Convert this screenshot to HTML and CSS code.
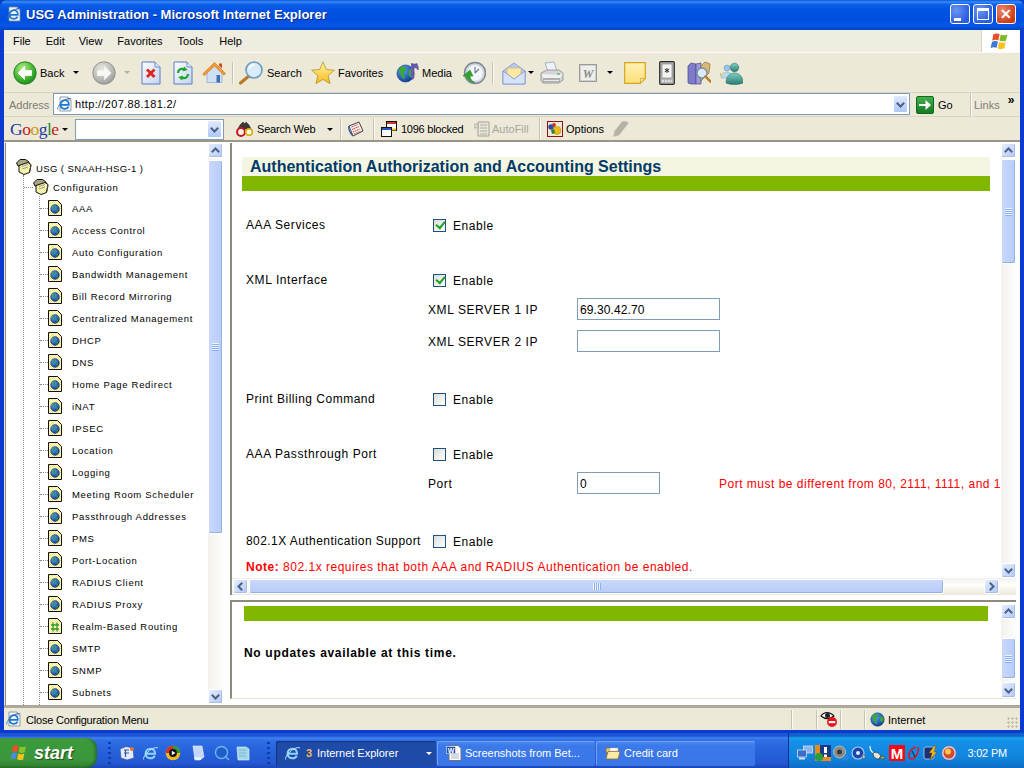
FILE: index.html
```html
<!DOCTYPE html>
<html lang="en">
<head>
<meta charset="utf-8">
<title>USG Administration - Microsoft Internet Explorer</title>
<link rel="stylesheet" href="styles.css">
</head>
<body>
<svg class="defs" width="0" height="0" aria-hidden="true">
  <defs>
    <radialGradient id="gGreen" cx="40%" cy="30%" r="75%"><stop offset="0" stop-color="#b6ee8e"/><stop offset=".55" stop-color="#4cbb38"/><stop offset="1" stop-color="#148a18"/></radialGradient>
    <radialGradient id="gGray" cx="40%" cy="30%" r="75%"><stop offset="0" stop-color="#e6e6e2"/><stop offset=".6" stop-color="#bdbdb8"/><stop offset="1" stop-color="#9a9a96"/></radialGradient>
    <linearGradient id="gPage" x1="0" y1="0" x2="1" y2="1"><stop offset="0" stop-color="#fbfcff"/><stop offset="1" stop-color="#c4d4f2"/></linearGradient>
    <linearGradient id="gStar" x1="0" y1="0" x2="0" y2="1"><stop offset="0" stop-color="#fff6a8"/><stop offset="1" stop-color="#f5b818"/></linearGradient>
    <linearGradient id="gNote" x1="0" y1="0" x2="0" y2="1"><stop offset="0" stop-color="#fff2b2"/><stop offset="1" stop-color="#fddf7c"/></linearGradient>
    <radialGradient id="gGlobe" cx="35%" cy="30%" r="80%"><stop offset="0" stop-color="#5aa8f0"/><stop offset="1" stop-color="#0a2f8e"/></radialGradient>
    <linearGradient id="gFolder" x1="0" y1="0" x2="0" y2="1"><stop offset="0" stop-color="#fff3b8"/><stop offset="1" stop-color="#e2b958"/></linearGradient>
    <linearGradient id="gGo" x1="0" y1="0" x2="0" y2="1"><stop offset="0" stop-color="#48b04c"/><stop offset="1" stop-color="#117a24"/></linearGradient>
    <linearGradient id="gMsg" x1="0" y1="0" x2="0" y2="1"><stop offset="0" stop-color="#7ed0c0"/><stop offset="1" stop-color="#2a7a72"/></linearGradient>
    <pattern id="dither" width="2" height="2" patternUnits="userSpaceOnUse"><rect width="2" height="2" fill="#fff"/><rect width="1" height="1" fill="#f5ea60"/><rect x="1" y="1" width="1" height="1" fill="#f5ea60"/></pattern>

    <symbol id="ie" viewBox="0 0 16 16">
      <path d="M3 1h8l3 3v11H3z" fill="#f4f6fb" stroke="#7d8794" stroke-width=".8"/>
      <path d="M11 1v3h3" fill="#cfd6e4" stroke="#7d8794" stroke-width=".6"/>
      <path d="M3.500 8.800h8.300c.2-2.800-1.500-4.600-3.900-4.600-2.600 0-4.400 1.900-4.400 4.300 0 2.500 1.800 4.300 4.400 4.300 1.800 0 3-.8 3.700-2.200" fill="none" stroke="#1a78d0" stroke-width="1.700"/>
      <path d="M.8 13.500c-.9-2 3-6.800 7-9.300 3-1.800 5.500-2.200 6.500-1.300" fill="none" stroke="#2a6cc4" stroke-width=".9"/>
    </symbol>
    <symbol id="ieBlue" viewBox="0 0 16 16">
      <path d="M2.200 8.800h9.800c.2-3.100-1.700-5.100-4.400-5.100-2.900 0-5 2.100-5 4.800s2.100 4.800 5 4.800c2 0 3.400-.9 4.200-2.500" fill="none" stroke="#8ed1fa" stroke-width="2.100"/>
      <path d="M.7 14.500c-1-2 3-7.300 7.300-10 3.200-2 6-2.400 7-1.400" fill="none" stroke="#c4e6fc" stroke-width="1"/>
    </symbol>
    <symbol id="back" viewBox="0 0 24 24">
      <circle cx="12" cy="12" r="11.200" fill="url(#gGreen)" stroke="#1d7e22" stroke-width=".9"/>
      <path d="M5 12l6.500-6.500v4h7v5h-7v4z" fill="#fff" stroke="#fff" stroke-width=".8" stroke-linejoin="round"/>
    </symbol>
    <symbol id="fwd" viewBox="0 0 24 24">
      <circle cx="12" cy="12" r="11.200" fill="url(#gGray)" stroke="#8e8e8a" stroke-width=".9"/>
      <path d="M19 12l-6.500-6.500v4h-7v5h7v4z" fill="#f7f7f5" stroke="#f7f7f5" stroke-width=".8" stroke-linejoin="round"/>
    </symbol>
    <symbol id="stop" viewBox="0 0 20 24">
      <path d="M1 1h13l5 5v17H1z" fill="url(#gPage)" stroke="#5a7cc0"/>
      <path d="M14 1v5h5" fill="#dfe8fa" stroke="#5a7cc0" stroke-width=".8"/>
      <path d="M6 8.500l7.500 7.500M13.500 8.500L6 16" stroke="#e1231c" stroke-width="2.800"/>
    </symbol>
    <symbol id="refresh" viewBox="0 0 20 24">
      <path d="M1 1h13l5 5v17H1z" fill="url(#gPage)" stroke="#5a7cc0"/>
      <path d="M14 1v5h5" fill="#dfe8fa" stroke="#5a7cc0" stroke-width=".8"/>
      <path d="M5 12c0-3 2.500-4.500 5-4l2 1" fill="none" stroke="#1ea52a" stroke-width="2.300"/>
      <path d="M11 5.500l3.800 3.500-5 1.200z" fill="#1ea52a"/>
      <path d="M15 13c0 3-2.500 4.500-5 4l-2-1" fill="none" stroke="#1ea52a" stroke-width="2.300"/>
      <path d="M9 19.500L5.200 16l5-1.200z" fill="#1ea52a"/>
    </symbol>
    <symbol id="home" viewBox="0 0 24 24">
      <path d="M5 11v10.500h15V11l-7-7z" fill="#cfe0f5" stroke="#8aa6cc" stroke-width=".7"/>
      <path d="M14.500 14h3.500v7.500h-3.500z" fill="#3f6fb5"/>
      <path d="M.7 13L12.500 1.500 23.500 12.500l-1.500 1.700L12.500 5 2.500 14.500z" fill="#f49a30" stroke="#c96c12" stroke-width=".6"/>
      <path d="M17 2.500h3v5l-3-2.800z" fill="#d84a22"/>
    </symbol>
    <symbol id="search" viewBox="0 0 26 24">
      <path d="M11.500 14.500l-9 7.500" stroke="#b97a2a" stroke-width="3.200" stroke-linecap="round"/>
      <circle cx="16" cy="9" r="8" fill="#d8ecfa" stroke="#6c9bc6" stroke-width="1.600"/>
      <path d="M11 7.500c1-2.500 3-3.500 5.500-3.500" fill="none" stroke="#fff" stroke-width="1.600"/>
    </symbol>
    <symbol id="star" viewBox="0 0 24 24">
      <path d="M12 .8l3.200 7.700 8.200.7-6.200 5.400 1.900 8.100-7.100-4.300-7.100 4.300 1.900-8.100L.6 9.200l8.200-.7z" fill="url(#gStar)" stroke="#b8941c" stroke-width=".8" stroke-linejoin="round"/>
    </symbol>
    <symbol id="globe" viewBox="0 0 16 16">
      <circle cx="8" cy="8" r="7.200" fill="url(#gGlobe)" stroke="#123b7a" stroke-width=".5"/>
      <path d="M4 2.500c2-1 4 0 4.500 1.500S6.500 6 6.500 8 8 11 7 13c-1.500-.5-2.500-2.500-3-4S1.500 6.500 2.500 5zM11 5c1-.5 3-.5 3.500 1S14 10.500 12 11c-1 0-1.500-3-1-6z" fill="#3da83a"/>
    </symbol>
    <symbol id="media" viewBox="0 0 24 24">
      <use href="#globe" x="0" y="3" width="19" height="19"/>
      <path d="M15 2.500c2 .3 4 1 6 0 .5 2.500 2 4 1 6.500-.5-1.500-2-2.500-4-2.500v10c-.5 2.200-3 2.400-3 .5" fill="#6a5cb0" stroke="#403578" stroke-width=".5"/>
    </symbol>
    <symbol id="clock" viewBox="0 0 24 24">
      <circle cx="13" cy="12" r="10.500" fill="#cfd6de" stroke="#7b8794" stroke-width="1.400"/>
      <circle cx="13" cy="12" r="7.800" fill="#f3f6f9"/>
      <path d="M13 12l4-4M13 12V6" stroke="#6b7480" stroke-width="1.100"/>
      <path d="M8 9l-7 6h3c1 4 5 6.500 9 6.500-3-1-5-3.500-5-6.500h3z" fill="#2fa52f" stroke="#1c7a1f" stroke-width=".5"/>
    </symbol>
    <symbol id="mail" viewBox="0 0 24 24">
      <path d="M1 10L12 2l11 8v13H1z" fill="#b6cbf2" stroke="#7c93cf" stroke-width=".8"/>
      <path d="M5 7h14v7l-7 4-7-4z" fill="#ffe7a4" stroke="#d7ae4a" stroke-width=".6"/>
      <path d="M1 10l11 8 11-8v13H1z" fill="#d6e2f9" stroke="#7c93cf" stroke-width=".8"/>
    </symbol>
    <symbol id="printer" viewBox="0 0 24 24">
      <path d="M5 2l9-1 3 9-9 1z" fill="#eef2fa" stroke="#8d97a8" stroke-width=".7"/>
      <path d="M1 12l6-3h12l4 3v7l-4 3H3l-2-2z" fill="#d4d6d4" stroke="#8a8c8c" stroke-width=".8"/>
      <path d="M2 13l17 1 4-2-3 5H3z" fill="#f1f2f0"/>
      <path d="M3 17h17v4.500H3z" fill="#a9abac"/>
      <path d="M4 19.500h15" stroke="#e8e8e6" stroke-width="1.200"/>
      <path d="M17 13h3" stroke="#35b24a" stroke-width="1.100"/>
    </symbol>
    <symbol id="word" viewBox="0 0 18 18">
      <rect x=".5" y=".5" width="17" height="17" fill="#cfd0cd" stroke="#9a9b98"/>
      <rect x="2" y="2" width="14" height="14" fill="#eeeeec"/>
      <text x="9" y="14" text-anchor="middle" class="svg-w">W</text>
    </symbol>
    <symbol id="note" viewBox="0 0 22 22">
      <path d="M.7.7h20.600v15.800l-5 4.800H.7z" fill="url(#gNote)" stroke="#d8a41e" stroke-width="1.200"/>
      <path d="M21 16.500h-4.500v4.500z" fill="#f5e6b4" stroke="#d8a41e" stroke-width=".8"/>
    </symbol>
    <symbol id="pda" viewBox="0 0 16 24">
      <rect x=".7" y=".7" width="14.600" height="22.600" rx="1" fill="#b4b5b4" stroke="#2a2a2a" stroke-width="1.200"/>
      <rect x="3" y="3" width="10" height="14" fill="#f4f4f2" stroke="#666" stroke-width=".5"/>
      <path d="M8 7v5M5.800 8.200l4.400 2.600M10.200 8.200l-4.400 2.600" stroke="#222" stroke-width=".9"/>
      <path d="M3 20h10" stroke="#eee" stroke-width="1.600" stroke-dasharray="2 1"/>
    </symbol>
    <symbol id="book" viewBox="0 0 24 24">
      <path d="M1 5l3-3 5 1v20l-5 0-3-1z" fill="#7e7cc8" stroke="#4a4890" stroke-width=".7"/>
      <path d="M9 3l5-1v21H9z" fill="#9c9ad8" stroke="#4a4890" stroke-width=".7"/>
      <path d="M14 5l4-4 5 2-1 9-8 8z" fill="#d8b878" stroke="#8e6e2e" stroke-width=".7"/>
      <circle cx="15" cy="12" r="5" fill="#dceaf8" stroke="#6f8fae" stroke-width="1.300"/>
      <path d="M18.500 15.500l5 5" stroke="#b9832e" stroke-width="2.600" stroke-linecap="round"/>
    </symbol>
    <symbol id="msgr" viewBox="0 0 24 24">
      <circle cx="8" cy="7" r="3" fill="#9cc4e8" stroke="#6c8fb8" stroke-width=".5"/>
      <path d="M2 17c0-4 3-6 6-6s5 2 5 6z" fill="#bcd8ec" stroke="#7ea5c6" stroke-width=".5"/>
      <path d="M2 12c1 1 1 2 0 3h-1v-3z" fill="#e8c23a"/>
      <circle cx="15.500" cy="6.500" r="4.300" fill="url(#gMsg)" stroke="#1f6660" stroke-width=".5"/>
      <path d="M7 22c0-7 4-10 8.500-10S24 15 24 22c-5 2-12 2-17 0z" fill="url(#gMsg)" stroke="#1f6660" stroke-width=".5"/>
    </symbol>
    <symbol id="binoc" viewBox="0 0 18 16">
      <path d="M4 4l3-3 1.500 2 1.500-2 3 3 2 4H2z" fill="#3a3a38" stroke="#161616" stroke-width=".5"/>
      <circle cx="5" cy="11" r="3.900" fill="#f5f5f0" stroke="#c4161c" stroke-width="2"/>
      <circle cx="13" cy="11" r="3.300" fill="#fffde8" stroke="#d2a80e" stroke-width="1.600"/>
    </symbol>
    <symbol id="news" viewBox="0 0 16 16">
      <path d="M1 5L11 1l4 9-10 5z" fill="#f4f0e4" stroke="#28304a" stroke-width=".9"/>
      <path d="M3.500 6l6-2.500M4 8.500l7-3M5 11l6.500-2.800M6 13l6.500-2.800" stroke="#c03030" stroke-width=".9" stroke-dasharray="1.500 .5"/>
      <path d="M1 5c-.8 2 .4 7 4 10" fill="none" stroke="#3958a8" stroke-width="1.300"/>
    </symbol>
    <symbol id="popup" viewBox="0 0 16 16">
      <rect x="5.500" y=".5" width="10" height="9" fill="#fff" stroke="#111"/>
      <path d="M6 1h9v2H6z" fill="#d2362a"/>
      <rect x=".5" y="6.500" width="10" height="9" fill="#fff" stroke="#111"/>
      <path d="M1 7h9v2H1z" fill="#2456c8"/>
      <path d="M11 7.500h4v2h-4z" fill="#f0c020"/>
    </symbol>
    <symbol id="autofill" viewBox="0 0 16 16">
      <path d="M4 1h11v14H4z" fill="#e8e6da" stroke="#a4a294"/>
      <path d="M6 4h7M6 7h7M6 10h7M6 13h7" stroke="#b0ae9e"/>
      <path d="M0 3h4v4H0z" fill="#d8d6c8" stroke="#a4a294" stroke-width=".6"/>
    </symbol>
    <symbol id="options" viewBox="0 0 16 16">
      <rect x=".5" y=".5" width="15" height="15" fill="#ece9d8" stroke="#8e1318"/>
      <circle cx="4" cy="6" r="2.700" fill="#2552a8"/>
      <circle cx="7" cy="4" r="1.900" fill="#c83030"/>
      <circle cx="10" cy="9.500" r="4" fill="#ecbc16" stroke="#b08a10" stroke-width=".5"/>
      <path d="M4 9l3-1 1 4-3 1z" fill="#30803a"/>
    </symbol>
    <symbol id="pencil" viewBox="0 0 16 16">
      <path d="M9 .5c2-1 6-.2 6.500 1.800L6 14.500 .5 15.800l.8-5.500z" fill="#b4b2a4" stroke="#d8d6c8" stroke-width=".6"/>
    </symbol>
    <symbol id="go" viewBox="0 0 18 18">
      <rect x=".5" y=".5" width="17" height="17" rx="1.500" fill="url(#gGo)" stroke="#0d6a1e"/>
      <path d="M3 8h6.500V4l5.500 5-5.500 5v-4H3z" fill="#fff"/>
    </symbol>
    <symbol id="flag" viewBox="0 0 20 20">
      <path d="M3 4c2-1.200 4-1 5.800-.2L7.500 9.500C6 8.700 3.800 8.600 2 9.800z" fill="#e8502a"/>
      <path d="M9.800 4c2 .9 3.700 1 6 .1l-1.300 5.600c-2.200.9-4 .7-6-.2z" fill="#7cba28"/>
      <path d="M1.800 10.800c2-1.200 3.800-1 5.500-.2L6 16.200c-1.800-.8-3.800-.9-5.500.2z" fill="#3a7ad8"/>
      <path d="M8.300 11c2 .8 3.700 1 6 .1L13 16.700c-2.200.9-4 .7-6-.2z" fill="#f6c120"/>
    </symbol>
    <symbol id="folder" viewBox="0 0 16 16">
      <path d="M.5 4L4 .5h5.500L13 3v4H2z" fill="#a8a486" stroke="#111"/>
      <path d="M3 6.500L12 3.500l3 2-1.500 8L8 15.500 3 13z" fill="url(#dither)" stroke="#111"/>
      <path d="M6 7.500l6-2M6 10l6-2" stroke="#777" stroke-width=".7"/>
      <path d="M14.500 5.500l1 1-1.500 7-1 .5z" fill="#444"/>
    </symbol>
    <symbol id="doc" viewBox="0 0 14 16">
      <path d="M.5.500h9l4 4v11H.5z" fill="url(#dither)" stroke="#111"/>
      <circle cx="7" cy="9" r="4.400" fill="url(#gGlobe)" stroke="#111" stroke-width=".4"/>
      <path d="M5.500 5.800c1.200.2 2.200.8 1.500 2.200S5.400 9.500 5 8.500zM8.500 9.500c1 0 1.800.2 1.500 1.200l-1.500 1.800z" fill="#2e9a30"/>
    </symbol>
    <symbol id="docRealm" viewBox="0 0 14 16">
      <path d="M.5.500h9l4 4v11H.5z" fill="url(#dither)" stroke="#111"/>
      <path d="M5 4.500v9M9 4.500v9M3 7h8M3 11h8" stroke="#2e9a30" stroke-width="1.300"/>
    </symbol>
    <symbol id="chev" viewBox="0 0 9 7">
      <path d="M.8 5.200L4.500 1.500l3.700 3.700" fill="none" stroke="#4d6185" stroke-width="2"/>
    </symbol>
    <symbol id="eye" viewBox="0 0 18 18">
      <path d="M1 6c3-4.500 9-4.500 13 0-4 3-9 3.500-13 0z" fill="#fff" stroke="#111" stroke-width="1.100"/>
      <circle cx="7.500" cy="5.500" r="2.500" fill="#222"/>
      <circle cx="12" cy="12" r="5" fill="#e8121c"/>
      <path d="M8.700 11h6.600v2.200H8.700z" fill="#fff"/>
    </symbol>
    <symbol id="startflag" viewBox="0 0 18 18">
      <path d="M3 2c2-1 4-.8 5.600 0L7.300 8C5.700 7.200 3.700 7.100 2 8.100z" fill="#e8502a"/>
      <path d="M9.700 2.400c2 .9 3.700 1 6.300-.2l-1.300 6c-2.400 1-4.200.9-6.100 0z" fill="#86c42e"/>
      <path d="M1.800 9.200c1.800-1 3.700-.9 5.200-.1L5.800 15c-1.700-.8-3.600-.8-5.300.2z" fill="#4a8de0"/>
      <path d="M8.300 9.500c2 .9 3.700 1 6.100 0L13.100 15.400c-2.300.9-4 .8-6.100-.1z" fill="#f6c120"/>
    </symbol>
    <symbol id="folderOpen" viewBox="0 0 16 16">
      <path d="M1 3h5l1 1.500h6v3H1z" fill="#e8c878" stroke="#8e6e2a" stroke-width=".7"/>
      <path d="M1 14l2-7.500h12L13 14z" fill="#fde9a8" stroke="#8e6e2a" stroke-width=".8"/>
      <path d="M5 3h8v3H5z" fill="#fff" stroke="#aaa" stroke-width=".4"/>
    </symbol>
    <symbol id="wordDoc" viewBox="0 0 16 16">
      <path d="M3 .5h9l3 3v12H3z" fill="#fff" stroke="#6a7480"/>
      <path d="M5 9h8M5 11h8M5 13h8" stroke="#8a96a6" stroke-width=".7"/>
      <rect x=".5" y="1.500" width="9" height="7" fill="#1f4aa8" stroke="#fff" stroke-width=".5"/>
      <text x="5" y="7.500" text-anchor="middle" class="svg-wd">W</text>
    </symbol>
    <symbol id="qlOutlook" viewBox="0 0 16 16">
      <path d="M1 4l6-2.500L14 3l1 10-7 2-6-2z" fill="#e4eafa" stroke="#3b5ea8" stroke-width=".8"/>
      <path d="M5 5h5M5 8h5M6.500 5v7" stroke="#3456a0" stroke-width="1.200"/>
      <circle cx="13" cy="4" r="2" fill="#e8702a"/>
    </symbol>
    <symbol id="qlWmp" viewBox="0 0 16 16">
      <circle cx="8" cy="8" r="7.300" fill="#f4b81c"/>
      <path d="M8 .7a7.300 7.300 0 0 1 7.300 7.300H8z" fill="#2a9a38"/>
      <path d="M.7 8A7.300 7.300 0 0 1 8 .7V8z" fill="#d63026"/>
      <circle cx="8" cy="8" r="3.900" fill="#111"/>
      <path d="M6.800 5.700L10.500 8l-3.700 2.300z" fill="#fff"/>
    </symbol>
    <symbol id="qlDesk" viewBox="0 0 14 16">
      <path d="M2 1h9l2 11-4 3H4z" fill="#c4d6f8" stroke="#e8f0fc" stroke-width=".6"/>
      <path d="M3 12h7v3H4z" fill="#e8eef8"/>
    </symbol>
    <symbol id="qlQt" viewBox="0 0 16 16">
      <circle cx="7.500" cy="7.500" r="6" fill="#1e5ec8" stroke="#6fb4f2" stroke-width="1.400"/>
      <path d="M11 11l4 4" stroke="#6fb4f2" stroke-width="1.500"/>
    </symbol>
    <symbol id="qlNote" viewBox="0 0 14 16">
      <path d="M1 2h9l3 2v11H2z" fill="#a4d8e8" stroke="#e4f4f8" stroke-width=".6"/>
      <path d="M3 5h7M3 8h7M3 11h7" stroke="#6fb0c4" stroke-width=".8"/>
    </symbol>
    <symbol id="trNet" viewBox="0 0 16 16">
      <rect x="6.500" y="1" width="9" height="7" fill="#8fb2f0" stroke="#dce8fc" stroke-width=".7"/>
      <rect x=".5" y="5" width="9" height="7" fill="#3a6cc8" stroke="#e4ecfc" stroke-width=".7"/>
      <path d="M2 12.500h6v2H2z" fill="#d8dee8"/>
    </symbol>
    <symbol id="trOrange" viewBox="0 0 16 16">
      <rect width="16" height="16" fill="#e88a1c"/>
      <rect x="5" y="0" width="11" height="12" fill="#163a88"/>
      <path d="M9 2h3v6H9zM9 9.500h3V12H9z" fill="#fff"/>
      <circle cx="4" cy="12" r="4" fill="#2a9c38"/>
    </symbol>
    <symbol id="trSpeaker" viewBox="0 0 16 16">
      <circle cx="6.500" cy="7" r="6" fill="#8a8a86" stroke="#c8c8c4" stroke-width=".8"/>
      <circle cx="6.500" cy="7" r="2.500" fill="#3a3a38"/>
      <path d="M10 15l5-5M12.500 15.500l3-3" stroke="#5c86dc" stroke-width="1"/>
    </symbol>
    <symbol id="trCd" viewBox="0 0 16 16">
      <circle cx="7" cy="8" r="6" fill="#1c46a8" stroke="#a8c8f4" stroke-width="1.200"/>
      <circle cx="7" cy="8" r="2" fill="#dce8fc"/>
      <path d="M11 9l4 3-3 2z" fill="#c4c8d0" stroke="#333" stroke-width=".4"/>
    </symbol>
    <symbol id="trMouse" viewBox="0 0 16 16">
      <path d="M1 1c0 3 1 6 4 7" fill="none" stroke="#fff" stroke-width="1.100"/>
      <path d="M4 8c3-2 6 0 8 3l-2 3c-3 .5-6-2-6-6z" fill="#e4e4e0" stroke="#222" stroke-width=".7"/>
      <path d="M10 13l5-2v3z" fill="#d8c820" stroke="#222" stroke-width=".4"/>
    </symbol>
    <symbol id="trM" viewBox="0 0 16 16">
      <rect width="16" height="16" fill="#f40a12"/>
      <text x="8" y="14" text-anchor="middle" class="svg-m">M</text>
    </symbol>
    <symbol id="trRing" viewBox="0 0 14 16">
      <path d="M9 2C4 3 1 8 2 12c1 3 5 2 7-1s3-6 2-9" fill="none" stroke="#e8121c" stroke-width="1.500"/>
      <path d="M5 6l3 6" stroke="#10203c" stroke-width="1"/>
    </symbol>
    <symbol id="trBolt" viewBox="0 0 16 16">
      <rect x="1" y="2" width="10" height="12" rx="2" fill="#1c3272" stroke="#d8e0f4" stroke-width=".7"/>
      <path d="M11 1L6 8h3l-2 7 7-8h-3l2-6z" fill="#f2b41c" stroke="#5a3a0a" stroke-width=".4"/>
    </symbol>
    <symbol id="trOrb" viewBox="0 0 16 16">
      <circle cx="8" cy="8" r="7.300" fill="#d7d2e8" stroke="#5a4a9a" stroke-width=".5"/>
      <circle cx="8" cy="8" r="5.500" fill="#d24a30"/>
      <circle cx="7" cy="6.500" r="3" fill="#f5c84a"/>
    </symbol>
  </defs>
</svg>

<div class="window">
  <header class="titlebar">
    <svg class="title-icon" width="16" height="16"><use href="#ie"/></svg>
    <span class="title-text">USG Administration - Microsoft Internet Explorer</span>
    <div class="win-btns">
      <span class="win-btn"><i class="glyph-min"></i></span>
      <span class="win-btn"><i class="glyph-max"></i></span>
      <span class="win-btn close"><i class="glyph-close">&#10005;</i></span>
    </div>
  </header>

  <div class="client">
    <nav class="menubar">
      <span class="menu m-file">File</span>
      <span class="menu m-edit">Edit</span>
      <span class="menu m-view">View</span>
      <span class="menu m-fav">Favorites</span>
      <span class="menu m-tools">Tools</span>
      <span class="menu m-help">Help</span>
      <span class="brand"><svg width="22" height="22"><use href="#flag"/></svg></span>
    </nav>

    <div class="toolbar">
      <svg class="i-back" width="24" height="24"><use href="#back"/></svg><span class="lbl l-back">Back</span><i class="caret c-back"></i>
      <svg class="i-fwd" width="24" height="24"><use href="#fwd"/></svg><i class="caret dim c-fwd"></i>
      <svg class="i-stop" width="20" height="24"><use href="#stop"/></svg>
      <svg class="i-refresh" width="20" height="24"><use href="#refresh"/></svg>
      <svg class="i-home" width="24" height="24"><use href="#home"/></svg>
      <i class="sep s-a"></i>
      <svg class="i-search" width="26" height="24"><use href="#search"/></svg><span class="lbl l-search">Search</span>
      <svg class="i-star" width="24" height="24"><use href="#star"/></svg><span class="lbl l-fav">Favorites</span>
      <svg class="i-media" width="24" height="24"><use href="#media"/></svg><span class="lbl l-media">Media</span>
      <svg class="i-clock" width="24" height="24"><use href="#clock"/></svg>
      <i class="sep s-b"></i>
      <svg class="i-mail" width="24" height="24"><use href="#mail"/></svg><i class="caret c-mail"></i>
      <svg class="i-print" width="24" height="24"><use href="#printer"/></svg>
      <svg class="i-word" width="18" height="18"><use href="#word"/></svg><i class="caret c-word"></i>
      <svg class="i-note" width="22" height="22"><use href="#note"/></svg>
      <svg class="i-pda" width="16" height="24"><use href="#pda"/></svg>
      <svg class="i-book" width="24" height="24"><use href="#book"/></svg>
      <svg class="i-msgr" width="24" height="24"><use href="#msgr"/></svg>
    </div>

    <div class="addressbar">
      <span class="addr-label">Address</span>
      <div class="addr-box">
        <svg width="16" height="16"><use href="#ie"/></svg>
        <span class="addr-url">http://207.88.181.2/</span>
        <span class="combo-btn"><svg class="down" width="9" height="7"><use href="#chev"/></svg></span>
      </div>
      <svg class="i-go" width="18" height="18"><use href="#go"/></svg><span class="lbl l-go">Go</span>
      <i class="sep-v s-links"></i>
      <span class="links">Links</span>
      <span class="more">&#187;</span>
    </div>

    <div class="googlebar">
      <span class="google"><b class="g-b">G</b><b class="g-r">o</b><b class="g-y">o</b><b class="g-b">g</b><b class="g-g">l</b><b class="g-r">e</b></span>
      <i class="caret c-google"></i>
      <div class="g-input"><span class="combo-btn"><svg class="down" width="9" height="7"><use href="#chev"/></svg></span></div>
      <svg class="i-binoc" width="18" height="16"><use href="#binoc"/></svg><span class="lbl l-web">Search Web</span><i class="caret c-web"></i>
      <i class="sep s-g1"></i>
      <svg class="i-news" width="16" height="16"><use href="#news"/></svg>
      <i class="sep s-g2"></i>
      <svg class="i-popup" width="16" height="16"><use href="#popup"/></svg><span class="lbl l-blocked">1096 blocked</span>
      <svg class="i-autofill" width="16" height="16"><use href="#autofill"/></svg><span class="lbl dim l-autofill">AutoFill</span>
      <i class="sep s-g3"></i>
      <svg class="i-options" width="16" height="16"><use href="#options"/></svg><span class="lbl l-options">Options</span>
      <svg class="i-pencil" width="16" height="16"><use href="#pencil"/></svg>
    </div>

    <main class="frames">
      <section class="pane-left">
        <div class="tree">
          <div class="node root"><svg width="16" height="16"><use href="#folder"/></svg><span>USG ( SNAAH-HSG-1 )</span></div>
          <div class="tree-l1">
            <div class="node cfg"><svg width="16" height="16"><use href="#folder"/></svg><span>Configuration</span></div>
            <div class="tree-l2">
              <div class="leaf"><svg width="14" height="16"><use href="#doc"/></svg><span>AAA</span></div>
              <div class="leaf"><svg width="14" height="16"><use href="#doc"/></svg><span>Access Control</span></div>
              <div class="leaf"><svg width="14" height="16"><use href="#doc"/></svg><span>Auto Configuration</span></div>
              <div class="leaf"><svg width="14" height="16"><use href="#doc"/></svg><span>Bandwidth Management</span></div>
              <div class="leaf"><svg width="14" height="16"><use href="#doc"/></svg><span>Bill Record Mirroring</span></div>
              <div class="leaf"><svg width="14" height="16"><use href="#doc"/></svg><span>Centralized Management</span></div>
              <div class="leaf"><svg width="14" height="16"><use href="#doc"/></svg><span>DHCP</span></div>
              <div class="leaf"><svg width="14" height="16"><use href="#doc"/></svg><span>DNS</span></div>
              <div class="leaf"><svg width="14" height="16"><use href="#doc"/></svg><span>Home Page Redirect</span></div>
              <div class="leaf"><svg width="14" height="16"><use href="#doc"/></svg><span>iNAT</span></div>
              <div class="leaf"><svg width="14" height="16"><use href="#doc"/></svg><span>IPSEC</span></div>
              <div class="leaf"><svg width="14" height="16"><use href="#doc"/></svg><span>Location</span></div>
              <div class="leaf"><svg width="14" height="16"><use href="#doc"/></svg><span>Logging</span></div>
              <div class="leaf"><svg width="14" height="16"><use href="#doc"/></svg><span>Meeting Room Scheduler</span></div>
              <div class="leaf"><svg width="14" height="16"><use href="#doc"/></svg><span>Passthrough Addresses</span></div>
              <div class="leaf"><svg width="14" height="16"><use href="#doc"/></svg><span>PMS</span></div>
              <div class="leaf"><svg width="14" height="16"><use href="#doc"/></svg><span>Port-Location</span></div>
              <div class="leaf"><svg width="14" height="16"><use href="#doc"/></svg><span>RADIUS Client</span></div>
              <div class="leaf"><svg width="14" height="16"><use href="#doc"/></svg><span>RADIUS Proxy</span></div>
              <div class="leaf"><svg width="14" height="16"><use href="#docRealm"/></svg><span>Realm-Based Routing</span></div>
              <div class="leaf"><svg width="14" height="16"><use href="#doc"/></svg><span>SMTP</span></div>
              <div class="leaf"><svg width="14" height="16"><use href="#doc"/></svg><span>SNMP</span></div>
              <div class="leaf"><svg width="14" height="16"><use href="#doc"/></svg><span>Subnets</span></div>
              <div class="leaf"><svg width="14" height="16"><use href="#doc"/></svg></div>
            </div>
          </div>
        </div>
        <div class="vscroll vs-left">
          <span class="sb-btn"><svg width="9" height="7"><use href="#chev"/></svg></span>
          <span class="sb-thumb"><i class="grip"></i></span>
          <i class="sb-fill"></i>
          <span class="sb-btn"><svg class="down" width="9" height="7"><use href="#chev"/></svg></span>
        </div>
      </section>

      <section class="pane-right">
        <div class="upper">
          <div class="upper-main">
            <div class="content">
              <h1 class="page-title">Authentication Authorization and Accounting Settings</h1>
              <div class="green-bar"></div>

              <div class="row r-aaa"><span class="label">AAA Services</span><i class="check on"></i><span class="enable">Enable</span></div>
              <div class="row r-xml"><span class="label">XML Interface</span><i class="check on"></i><span class="enable">Enable</span></div>
              <div class="sub r-s1"><span class="sublabel">XML SERVER 1 IP</span><span class="field wide">69.30.42.70</span></div>
              <div class="sub r-s2"><span class="sublabel">XML SERVER 2 IP</span><span class="field wide"></span></div>
              <div class="row r-print"><span class="label">Print Billing Command</span><i class="check"></i><span class="enable">Enable</span></div>
              <div class="row r-pass"><span class="label">AAA Passthrough Port</span><i class="check"></i><span class="enable">Enable</span></div>
              <div class="sub r-port"><span class="sublabel">Port</span><span class="field narrow">0</span><span class="warn">Port must be different from 80, 2111, 1111, and 1</span></div>
              <div class="row r-8021"><span class="label">802.1X Authentication Support</span><i class="check"></i><span class="enable">Enable</span></div>
              <p class="note"><b>Note:</b> 802.1x requires that both AAA and RADIUS Authentication be enabled.</p>
            </div>
            <div class="vscroll vs-upper">
              <span class="sb-btn"><svg width="9" height="7"><use href="#chev"/></svg></span>
              <span class="sb-thumb"><i class="grip"></i></span>
              <i class="sb-fill"></i>
              <span class="sb-btn"><svg class="down" width="9" height="7"><use href="#chev"/></svg></span>
            </div>
          </div>
          <div class="hscroll">
            <span class="sb-btn"><svg class="left" width="9" height="7"><use href="#chev"/></svg></span>
            <span class="sb-hthumb"><i class="hgrip"></i></span>
            <i class="sb-fill"></i>
            <span class="sb-btn"><svg class="right" width="9" height="7"><use href="#chev"/></svg></span>
          </div>
        </div>

        <div class="lower">
          <div class="lower-main">
            <div class="green-bar lower-bar"></div>
            <p class="no-updates">No updates available at this time.</p>
          </div>
          <div class="vscroll vs-lower">
            <span class="sb-btn"><svg width="9" height="7"><use href="#chev"/></svg></span>
            <span class="sb-thumb"><i class="grip"></i></span>
            <i class="sb-fill"></i>
            <span class="sb-btn"><svg class="down" width="9" height="7"><use href="#chev"/></svg></span>
          </div>
        </div>
      </section>
    </main>

    <footer class="statusbar">
      <svg class="st-ie" width="16" height="16"><use href="#ie"/></svg>
      <span class="st-text">Close Configuration Menu</span>
      <i class="st-sep"></i>
      <i class="st-sep st-w25"></i>
      <span class="st-cell"><svg width="18" height="18"><use href="#eye"/></svg></span>
      <i class="st-sep"></i>
      <i class="st-sep st-w23"></i>
      <span class="st-zone"><svg width="15" height="15"><use href="#globe"/></svg><span>Internet</span></span>
      <i class="st-grip"></i>
    </footer>
  </div>
</div>

<div class="taskbar">
  <div class="start"><svg width="18" height="18"><use href="#startflag"/></svg><span>start</span></div>
  <i class="tb-grip g-1"></i>
  <svg class="q q1" width="16" height="16"><use href="#qlOutlook"/></svg>
  <svg class="q q2" width="16" height="16"><use href="#ieBlue"/></svg>
  <svg class="q q3" width="16" height="16"><use href="#qlWmp"/></svg>
  <svg class="q q4" width="14" height="16"><use href="#qlDesk"/></svg>
  <svg class="q q5" width="16" height="16"><use href="#qlQt"/></svg>
  <svg class="q q6" width="14" height="16"><use href="#qlNote"/></svg>
  <i class="tb-grip g-2"></i>
  <div class="task active">
    <svg width="16" height="16"><use href="#ieBlue"/></svg>
    <span class="task-count">3</span><span class="task-name">Internet Explorer</span>
    <i class="caret white"></i>
  </div>
  <div class="task">
    <svg width="16" height="16"><use href="#wordDoc"/></svg>
    <span class="task-name">Screenshots from Bet...</span>
  </div>
  <div class="task last">
    <svg width="16" height="16"><use href="#folderOpen"/></svg>
    <span class="task-name">Credit card</span>
  </div>
  <div class="tray">
    <svg width="16" height="16"><use href="#trNet"/></svg>
    <svg width="16" height="16"><use href="#trOrange"/></svg>
    <svg width="16" height="16"><use href="#trSpeaker"/></svg>
    <svg width="16" height="16"><use href="#trCd"/></svg>
    <svg width="16" height="16"><use href="#trMouse"/></svg>
    <svg class="tr-m" width="16" height="16"><use href="#trM"/></svg>
    <svg width="14" height="16"><use href="#trRing"/></svg>
    <svg width="16" height="16"><use href="#trBolt"/></svg>
    <svg width="16" height="16"><use href="#trOrb"/></svg>
    <span class="clock">3:02 PM</span>
  </div>
</div>
</body>
</html>
```

FILE: styles.css
```css
* { box-sizing: border-box; }
html, body { margin: 0; padding: 0; }
body {
  width: 1024px;
  height: 768px;
  overflow: hidden;
  display: flex;
  flex-direction: column;
  font-family: "Liberation Sans", "Noto Sans", sans-serif;
  font-size: 11px;
  color: #000;
  background: #0a3fc0;
}
i { display: block; font-style: normal; }
svg { display: block; flex: none; }
.defs { position: absolute; }
.svg-w { font: italic bold 12px "Liberation Serif", serif; fill: #8a8a88; }
.svg-wd { font: bold 7px "Liberation Sans", sans-serif; fill: #fff; }
.svg-m { font: bold 15px "Liberation Sans", sans-serif; fill: #fff; }

/* window */
.window { height: 733px; display: flex; flex-direction: column; background: #0a3ad0; border-radius: 7px 7px 0 0; }
.titlebar {
  height: 30px; flex: none; display: flex; align-items: center; padding: 0 8px 2px 6px;
  background: linear-gradient(#0a58dc 0, #3a8cf4 2px, #0f62ea 4px, #0153e4 10px, #0050e0 20px, #0356e6 26px, #0342c4 30px);
  border-radius: 7px 7px 0 0;
}
.title-text {
  margin-left: 4px; color: #fff; font: bold 13px "Liberation Sans", sans-serif;
  text-shadow: 1px 1px 0 #0a2a88;
}
.win-btns { margin-left: auto; display: flex; gap: 3px; }
.win-btn {
  width: 20px; height: 20px; border: 1px solid #fff; border-radius: 3px; position: relative;
  background: radial-gradient(circle at 30% 30%, #6a95f2, #2a5ce0 75%);
  display: flex; align-items: center; justify-content: center;
}
.win-btn.close { background: radial-gradient(circle at 30% 30%, #e8896a, #cf3a18 75%); }
.glyph-min { width: 7px; height: 3px; background: #fff; margin: 10px 6px 0 0; }
.glyph-max { width: 12px; height: 12px; border: 1px solid #fff; border-top-width: 3px; }
.glyph-close { color: #fff; font-size: 14px; font-weight: bold; line-height: 1; }

.client { flex: 1; min-height: 0; margin: 0 4px 3px; display: flex; flex-direction: column; background: #ece9d8; }

/* menu */
.menubar { height: 23px; flex: none; display: flex; align-items: center; background: #efece0; border-bottom: 1px solid #fbfaf5; position: relative; }
.menu { line-height: 22px; }
.m-file { margin-left: 9px; }
.m-edit { margin-left: 15px; }
.m-view { margin-left: 14px; }
.m-fav { margin-left: 15px; }
.m-tools { margin-left: 15px; }
.m-help { margin-left: 16px; }
.brand { margin-left: auto; width: 39px; height: 22px; background: #fff; border-left: 1px solid #d8d5c4; display: flex; justify-content: center; align-items: center; }

/* common toolbar bits */
.toolbar, .addressbar, .googlebar { display: flex; align-items: center; flex: none; background: #ece9d8; }
.lbl { line-height: 16px; white-space: nowrap; }
.lbl.dim { color: #a8a698; }
.caret { width: 0; height: 0; border-left: 3px solid transparent; border-right: 3px solid transparent; border-top: 3px solid #000; flex: none; }
.caret.dim { border-top-color: #b0ae9f; }
.caret.white { border-top-color: #fff; margin-left: auto; }
.sep { width: 1px; height: 22px; background: #c6c3b2; box-shadow: 1px 0 0 #fbfaf5; flex: none; }
.sep-v { width: 1px; height: 24px; background: #c6c3b2; box-shadow: 1px 0 0 #fbfaf5; flex: none; }

.toolbar { height: 40px; border-bottom: 1px solid #d8d5c4; padding-left: 9px; }
.i-back { margin-left: 0; }
.l-back { margin-left: 3px; width: 25px; }
.c-back { margin-left: 8px; }
.i-fwd { margin-left: 13px; }
.c-fwd { margin-left: 8px; }
.i-stop { margin-left: 11px; }
.i-refresh { margin-left: 12px; }
.i-home { margin-left: 9px; }
.s-a { margin-left: 6px; }
.i-search { margin-left: 5px; }
.l-search { margin-left: 3px; width: 34px; }
.i-star { margin-left: 10px; }
.l-fav { margin-left: 3px; width: 48px; }
.i-media { margin-left: 10px; }
.l-media { margin-left: 2px; width: 31px; }
.i-clock { margin-left: 9px; }
.s-b { margin-left: 6px; }
.i-mail { margin-left: 9px; }
.c-mail { margin-left: 2px; }
.i-print { margin-left: 6px; }
.i-word { margin-left: 15px; }
.c-word { margin-left: 10px; }
.i-note { margin-left: 11px; }
.i-pda { margin-left: 13px; }
.i-book { margin-left: 12px; }
.i-msgr { margin-left: 8px; }

.addressbar { height: 24px; border-bottom: 1px solid #d8d5c4; }
.addr-label { color: #7f7c73; margin-left: 5px; width: 44px; }
.addr-box {
  width: 857px; height: 22px; margin-top: -1px; background: #fff; border: 1px solid #7f9db9;
  display: flex; align-items: center; padding: 0 1px 0 3px;
}
.addr-url { margin-left: 2px; letter-spacing: .33px; }
.combo-btn {
  margin-left: auto; width: 15px; height: 18px; border: 1px solid #fff; border-radius: 2px;
  background: linear-gradient(#e1eafe, #aec8f7); display: flex; align-items: center; justify-content: center;
}
.down { transform: rotate(180deg); }
.left { transform: rotate(-90deg); }
.right { transform: rotate(90deg); }
.i-go { margin-left: 6px; }
.l-go { margin-left: 4px; width: 18px; }
.s-links { margin-left: 14px; }
.links { color: #7f7c73; margin-left: 3px; }
.more { margin-left: 8px; font-size: 12px; font-weight: bold; line-height: 1; margin-top: -9px; }

.googlebar { height: 25px; border-bottom: 2px solid #9a9786; padding-top: 1px; }
.google { margin-left: 6px; width: 48px; font: 17.5px "Liberation Serif", serif; letter-spacing: -.5px; line-height: 20px; }
.google b { font-weight: normal; }
.g-b { color: #1c3aa8; }
.g-r { color: #c8211a; }
.g-y { color: #d09a10; }
.g-g { color: #1f8a2c; }
.c-google { margin-left: 4px; }
.g-input { margin-left: 7px; width: 149px; height: 21px; background: #fff; border: 1px solid #7f9db9; display: flex; align-items: center; padding-right: 1px; }
.i-binoc { margin-left: 12px; }
.l-web { margin-left: 3px; width: 60px; letter-spacing: -.2px; }
.c-web { margin-left: 10px; }
.s-g1 { margin-left: 7px; }
.i-news { margin-left: 7px; }
.s-g2 { margin-left: 9px; }
.i-popup { margin-left: 7px; }
.l-blocked { margin-left: 4px; width: 64px; letter-spacing: -.25px; }
.i-autofill { margin-left: 9px; }
.l-autofill { margin-left: 2px; width: 38px; }
.s-g3 { margin-left: 9px; }
.i-options { margin-left: 7px; }
.l-options { margin-left: 3px; width: 39px; }
.i-pencil { margin-left: 8px; }

/* frames */
.frames { flex: 1; min-height: 0; display: flex; background: #fff; padding-top: 1px; }
.pane-left { width: 226px; flex: none; display: flex; border-left: 1px solid #ece9d8; }
.tree {
  width: 203px; flex: none; overflow: hidden; border-left: 1px solid #8c8a7c;
  padding: 16px 0 0 10px; font: 9.5px "Liberation Sans", sans-serif; letter-spacing: .68px;
}
.node { display: flex; align-items: center; white-space: nowrap; }
.root { height: 16px; }
.root span { margin-left: 4px; margin-top: 2px; letter-spacing: .4px; }
.tree-l1 { margin-left: 7px; border-left: 1px dotted #888; }
.cfg { height: 21px; padding-top: 3px; }
.cfg::before { content: ""; width: 9px; border-top: 1px dotted #888; }
.cfg span { margin-left: 4px; margin-top: 1px; }
.tree-l2 { margin-left: 15px; border-left: 1px dotted #888; padding-top: 1px; }
.leaf { height: 22px; display: flex; align-items: center; white-space: nowrap; }
.leaf::before { content: ""; width: 8px; flex: none; border-top: 1px dotted #888; }
.leaf span { margin-left: 10px; }

/* scrollbars */
.vscroll { width: 15px; flex: none; display: flex; flex-direction: column; background: linear-gradient(90deg, #f3f1ec, #fdfdfb); }
.sb-btn {
  width: 15px; height: 15px; flex: none; border: 1px solid #fff; border-radius: 2px;
  background: linear-gradient(135deg, #e4ecfe, #b2caf7); box-shadow: inset -1px -1px 0 #a9bde8;
  display: flex; align-items: center; justify-content: center;
}
.sb-thumb {
  flex: none; border: 1px solid #fff; border-radius: 2px; background: linear-gradient(90deg, #c9d8fc, #b7ccf9);
  box-shadow: inset -1px -1px 0 #98b1e4; display: flex; align-items: center; justify-content: center;
}
.sb-fill { flex: 1; min-width: 0; min-height: 0; }
.grip { width: 7px; height: 8px; background: repeating-linear-gradient(#eef4fe 0 1px, #8cb0f8 1px 2px); }
.vs-left .sb-thumb { margin-top: 2px; height: 374px; }
.vs-left { margin-bottom: 1px; }
.vs-upper .sb-thumb { margin-top: 1px; height: 105px; }
.vs-lower { margin-top: 2px; }
.vs-lower .sb-thumb { margin-top: 19px; height: 41px; }
.vs-lower .sb-btn:last-child { height: 16px; }

.hscroll { height: 17px; flex: none; display: flex; align-items: center; padding: 0 17px 0 1px; background: linear-gradient(#f3f1ec, #fdfdfb 40%, #ece9d8); }
.sb-hthumb {
  width: 695px; height: 15px; flex: none; margin-left: 1px; border: 1px solid #fff; border-radius: 2px;
  background: linear-gradient(#c9d8fc, #b7ccf9); box-shadow: inset -1px -1px 0 #98b1e4;
  display: flex; align-items: center; justify-content: center;
}
.hgrip { width: 8px; height: 7px; background: repeating-linear-gradient(90deg, #eef4fe 0 1px, #8cb0f8 1px 2px); }

.pane-right { flex: 1; min-width: 0; display: flex; flex-direction: column; }
.upper { height: 452px; width: 786px; flex: none; border-left: 2px solid #8c8a7c; display: flex; flex-direction: column; }
.upper-main { flex: 1; min-height: 0; display: flex; }
.content {
  width: 769px; flex: none; overflow: hidden; padding: 14px 0 0 10px;
  font: 12px "Liberation Sans", sans-serif; letter-spacing: .58px;
}
.page-title {
  margin: 0; height: 19px; width: 748px; background: #f5f6e2; color: #003a68;
  font: bold 16px/19px "Liberation Sans", sans-serif; letter-spacing: 0; padding-left: 8px; white-space: nowrap;
}
.green-bar { width: 748px; height: 15px; background: #80b800; }
.row { height: 22px; display: flex; align-items: center; padding-left: 4px; white-space: nowrap; }
.sub { height: 22px; display: flex; align-items: center; padding-left: 186px; white-space: nowrap; }
.label { width: 187px; flex: none; }
.enable, .sublabel, .warn { padding-top: 2px; }
.r-print .label { letter-spacing: .5px; }
.r-8021 .label { letter-spacing: .44px; }
.check {
  width: 13px; height: 13px; flex: none; border: 1px solid #1c5180;
  background: linear-gradient(135deg, #dcdcd7, #fff);
  position: relative;
}
.check.on::after {
  content: ""; position: absolute; left: 2px; top: 1px; width: 7px; height: 4px;
  border-left: 2px solid #21a121; border-bottom: 2px solid #21a121; transform: rotate(-50deg) ;
}
.enable { margin-left: 7px; }
.sublabel { width: 149px; flex: none; }
.field {
  height: 22px; flex: none; border: 1px solid #7f9db9; background: #fff; padding: 1px 0 0 2px; line-height: 20px; letter-spacing: .1px;
}
.wide { width: 143px; }
.narrow { width: 83px; }
.warn { margin-left: 59px; color: #f00; letter-spacing: .5px; }
.r-aaa { margin-top: 23px; }
.r-xml { margin-top: 33px; }
.r-s1 { margin-top: 7px; }
.r-s2 { margin-top: 10px; }
.r-print { margin-top: 36px; }
.r-pass { margin-top: 33px; }
.r-port { margin-top: 7px; }
.r-8021 { margin-top: 36px; }
.note { margin: 4px 0 0 4px; line-height: 22px; color: #f00; white-space: nowrap; letter-spacing: .51px; }

.lower { height: 99px; width: 786px; flex: none; margin-top: 5px; border-left: 2px solid #8c8a7c; border-top: 2px solid #8c8a7c; border-bottom: 1px solid #ece9d8; display: flex; }
.lower-main { width: 769px; flex: none; padding: 4px 0 0 12px; }
.lower-bar { width: 744px; }
.no-updates { margin: 24px 0 0; font: bold 12px/16px "Liberation Sans", sans-serif; letter-spacing: .68px; }

/* status */
.statusbar { height: 25px; flex: none; display: flex; align-items: center; background: #ece9d8; border-top: 3px solid; border-image: linear-gradient(#aca899, #e4e1d0) 1; }
.st-ie { margin-left: 2px; margin-top: -1px; }
.st-text { margin-left: 4px; width: 765px; padding-top: 2px; letter-spacing: -.2px; }
.st-sep { width: 1px; height: 19px; background: #c6c3b2; box-shadow: 1px 0 0 #fbfaf5; flex: none; }
.st-w25 { margin-left: 24px; }
.st-cell { width: 23px; display: flex; justify-content: center; }
.st-w23 { margin-left: 23px; }
.st-zone { margin-left: 5px; display: flex; align-items: center; }
.st-zone span { margin-left: 3px; padding-top: 2px; }
.st-grip { width: 11px; height: 11px; margin-left: auto; margin-right: 2px; margin-top: 6px;
  background: radial-gradient(circle at 1.500px 1.500px, #c4c1b0 1.300px, transparent 1.400px) 0 0 / 4px 4px; }

/* taskbar */
.taskbar {
  height: 35px; flex: none; display: flex; align-items: center; padding-top: 5px;
  background: linear-gradient(#1c55d4 0, #1c55d4 3px, #3f84f0 5px, #2f6fe4 7px, #2560da 20px, #2458d2 30px, #1a46b8 35px);
  color: #fff;
}
.start {
  width: 97px; height: 30px; flex: none; display: flex; align-items: center; padding-left: 10px;
  background: linear-gradient(#4ea24e 0, #3a9a3a 4px, #3c963c 22px, #2c7c2c 30px);
  border-radius: 0 10px 10px 0; box-shadow: inset -2px 0 3px rgba(0,0,0,.3);
}
.start span { margin-left: 6px; font: italic bold 18px "Liberation Sans", sans-serif; text-shadow: 1px 1px 1px #1a4a1a; }
.tb-grip { width: 3px; height: 22px; flex: none; background: repeating-linear-gradient(#0f3ea8 0 2px, transparent 2px 5px); }
.g-1 { margin-left: 11px; }
.q1 { margin-left: 8px; }
.q2 { margin-left: 8px; }
.q3 { margin-left: 6px; }
.q4 { margin-left: 10px; }
.q5 { margin-left: 9px; }
.q6 { margin-left: 6px; }
.g-2 { margin-left: 17px; }
.task {
  width: 158px; height: 25px; margin-left: 1px; flex: none; display: flex; align-items: center; padding: 0 4px 0 9px;
  background: linear-gradient(#4a8af2, #3b78ea 20%, #3a76e8); border-radius: 2px; box-shadow: inset 1px 1px 0 #6fa2f6;
}
.task svg { margin-right: 3px; }
.task.last { width: 159px; }
.task.active { width: 160px; margin-left: 6px; background: #1e4aa8; box-shadow: inset 1px 1px 1px #123380; }
.task-count { color: #f8b858; font-weight: bold; margin-left: 2px; width: 11px; }
.tray {
  margin-left: auto; height: 35px; margin-top: -5px; width: 236px; flex: none; display: flex; align-items: center; gap: 2px; padding: 5px 0 0 8px;
  background: linear-gradient(#0c63c8 0, #0c63c8 3px, #18a0ee 5px, #1590e8 8px, #1184dc 25px, #0e6cc8 35px); border-left: 1px solid #092f9a;
}
.tr-m { margin-left: 2px; }
.clock { margin-left: auto; margin-right: 17px; letter-spacing: -.2px; }
```
